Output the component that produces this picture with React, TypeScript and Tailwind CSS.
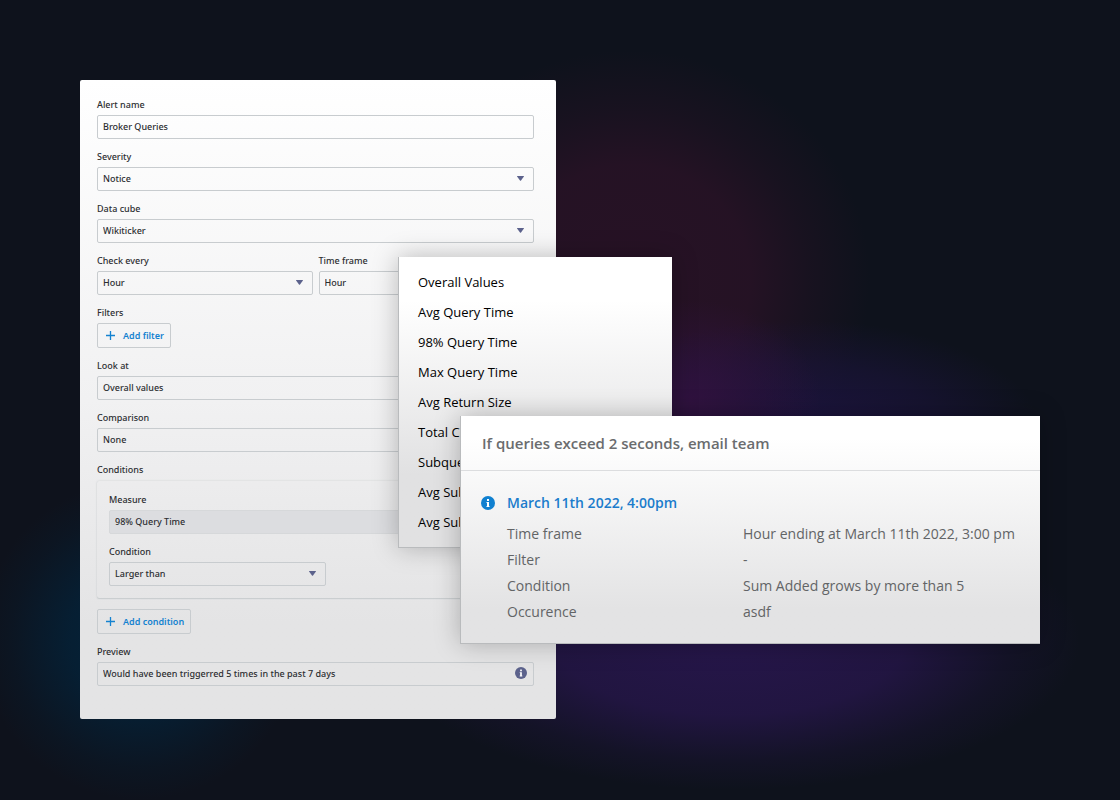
import type { ReactNode } from 'react'

interface FieldProps {
  id: string
  label: string
  children: ReactNode
}

interface SelectProps {
  id: string
  label: string
  options: string[]
  filled?: boolean
}

const measures = [
  'Overall Values',
  'Avg Query Time',
  '98% Query Time',
  'Max Query Time',
  'Avg Return Size',
  'Total Count',
  'Subqueries',
  'Avg Subquery',
  'Avg Subtotal',
]

const details = [
  { term: 'Time frame', value: 'Hour ending at March 11th 2022, 3:00 pm' },
  { term: 'Filter', value: '-' },
  { term: 'Condition', value: 'Sum Added grows by more than 5' },
  { term: 'Occurence', value: 'asdf' },
]

function InfoIcon({ className }: { className: string }) {
  return (
    <svg viewBox="0 0 14 14" className={className} aria-hidden="true">
      <circle cx="7" cy="7" r="7" fill="currentColor" />
      <rect x="6" y="3" width="2" height="2" fill="#fff" />
      <path d="M5.5 6H8v4h.5v1h-3v-1H6V7h-.5z" fill="#fff" />
    </svg>
  )
}

function Field({ id, label, children }: FieldProps) {
  return (
    <div className="flex flex-col gap-[3px]">
      <label htmlFor={id} className="leading-[14px]">{label}</label>
      <div className="relative">{children}</div>
    </div>
  )
}

function Select({ id, label, options, filled }: SelectProps) {
  return (
    <Field id={id} label={label}>
      <select
        id={id}
        className={
          filled
            ? 'block h-6 w-full appearance-none rounded-xs border border-[#d6d8da] bg-[#dcdde0] px-[5px]'
            : 'block h-6 w-full appearance-none rounded-xs border border-[#c8cccf] bg-transparent px-[5px]'
        }
      >
        {options.map((option) => (
          <option key={option}>{option}</option>
        ))}
      </select>
      <svg
        viewBox="0 0 7 5"
        className="pointer-events-none absolute top-[9px] right-[10px] h-[5px] w-[7px]"
        aria-hidden="true"
      >
        <path d="M.4 0h6.2q.5 0 .3.5L4 4.6q-.5.5-1 0L.1.5Q-.1 0 .4 0z" fill="#5c628c" />
      </svg>
    </Field>
  )
}

function AddButton({ id, label }: { id?: string; label: string }) {
  return (
    <button
      id={id}
      type="button"
      className="flex h-[25px] items-center gap-2 self-start rounded-xs border border-[#c8cccf] pr-[6px] pl-2 font-semibold text-[#1482d0]"
    >
      <svg viewBox="0 0 9 9" className="size-[9px]" aria-hidden="true">
        <path d="M4.5 0v9M0 4.5h9" stroke="currentColor" strokeWidth="1.3" />
      </svg>
      {label}
    </button>
  )
}

function AlertForm() {
  return (
    <form className="flex w-full max-w-[476px] flex-col gap-[11px] rounded-xs bg-linear-to-b from-white via-[#f1f1f2] via-50% to-[#e4e4e5] to-85% pt-[18px] pr-[22px] pb-[33px] pl-[17px] font-['Noto_Sans',sans-serif] text-[9px] font-medium text-[#2c2e31]">
      <Field id="alert-name" label="Alert name">
        <input
          id="alert-name"
          type="text"
          defaultValue="Broker Queries"
          className="block h-6 w-full rounded-xs border border-[#c8cccf] bg-transparent px-[5px] pb-[2px]"
        />
      </Field>
      <Select id="severity" label="Severity" options={['Notice']} />
      <Select id="data-cube" label="Data cube" options={['Wikiticker']} />
      <div className="grid grid-cols-2 gap-[6px]">
        <Select id="check-every" label="Check every" options={['Hour']} />
        <Select id="time-frame" label="Time frame" options={['Hour']} />
      </div>
      <Field id="filters" label="Filters">
        <AddButton id="filters" label="Add filter" />
      </Field>
      <Select id="look-at" label="Look at" options={['Overall values']} />
      <Select id="comparison" label="Comparison" options={['None']} />
      <fieldset>
        <legend className="mb-1 leading-[14px]">Conditions</legend>
        <div className="flex flex-col gap-[11px] rounded-xs p-3 shadow-[0_0_2px_#c8cccf,0_1px_1px_#c8cccf]">
          <Select id="measure" label="Measure" options={['98% Query Time']} filled />
          <div className="w-[217px]">
            <Select id="condition" label="Condition" options={['Larger than']} />
          </div>
        </div>
      </fieldset>
      <AddButton label="Add condition" />
      <Field id="preview" label="Preview">
        <input
          id="preview"
          type="text"
          readOnly
          defaultValue="Would have been triggerred 5 times in the past 7 days"
          className="block h-6 w-full rounded-xs border border-[#c8cccf] bg-transparent pr-6 pb-[2px] pl-[5px]"
        />
        <InfoIcon className="absolute top-[5px] right-[7px] size-3 text-[#5c628c]" />
      </Field>
    </form>
  )
}

function MeasureMenu() {
  return (
    <ul className="absolute top-[257px] left-[398px] w-[274px] border-b border-l border-[#b9bbbd] bg-linear-to-b from-white from-15% to-[#e1e1e2] to-75% pt-[11px] pb-[9px] text-[13px] text-black shadow-[0_0_24px_rgb(0_0_0/0.25)]">
      {measures.map((measure) => (
        <li key={measure}>
          <button type="button" className="block h-[30px] w-full px-[19px] text-left">
            {measure}
          </button>
        </li>
      ))}
    </ul>
  )
}

function AlertCard() {
  return (
    <section className="absolute top-[416px] left-[460px] w-[580px] border-b border-l border-[#b9bbbd] bg-linear-to-b from-white from-10% to-[#e3e3e4] to-85% text-sm text-[#626466] shadow-[0_0_24px_rgb(0_0_0/0.25)]">
      <h2 className="border-b border-[#dcdddf] px-[21px] text-[15px] leading-[54px] font-semibold text-[#6a6c6e]">
        If queries exceed 2 seconds, email team
      </h2>
      <div className="px-5 pt-[19px] pb-[18px]">
        <div className="mb-[5px] flex h-[26px] items-center gap-3">
          <InfoIcon className="size-[14px] text-[#1080d0]" />
          <h3 className="font-semibold text-[#1b7ccc]">March 11th 2022, 4:00pm</h3>
        </div>
        <dl className="pl-[26px] leading-[26px]">
          {details.map(({ term, value }) => (
            <div key={term} className="flex">
              <dt className="w-[236px]">{term}</dt>
              <dd>{value}</dd>
            </div>
          ))}
        </dl>
      </div>
    </section>
  )
}

export default function App() {
  return (
    <main className="relative min-h-screen bg-[#0e121c] bg-[radial-gradient(ellipse_160px_160px_at_140px_640px,#03243c,#03243cb3_45%,#03243c33_80%,transparent),radial-gradient(ellipse_130px_100px_at_690px_400px,#30123f,#30123f80_50%,transparent),radial-gradient(ellipse_240px_110px_at_800px_430px,#1d1440,#1d144080_60%,transparent),radial-gradient(ellipse_240px_230px_at_630px_280px,#271225,#271225e6_50%,#27122566_75%,transparent),radial-gradient(ellipse_350px_150px_at_730px_640px,#26164a,#26164acc_50%,#26164a40_80%,transparent)] p-20 font-['Open_Sans',sans-serif]">
      <AlertForm />
      <MeasureMenu />
      <AlertCard />
    </main>
  )
}
